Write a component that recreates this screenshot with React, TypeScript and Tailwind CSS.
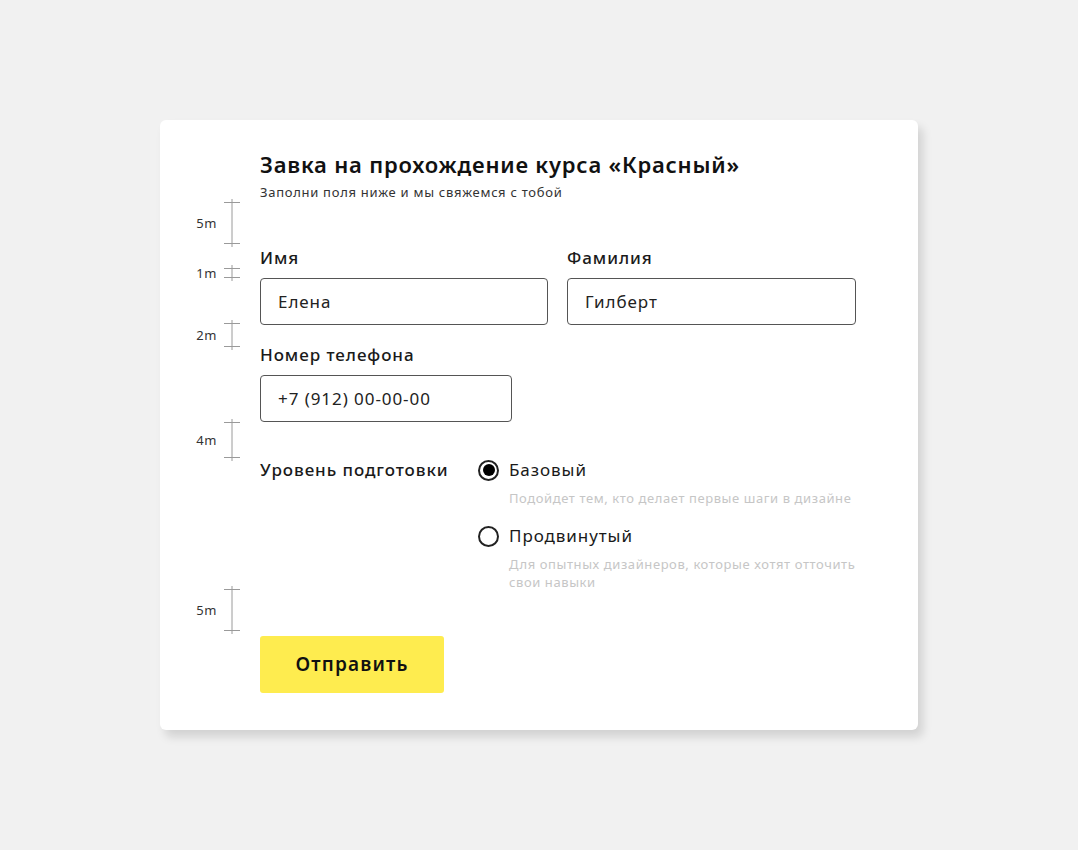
import React from "react";

// spacing annotations on the left edge of the card
const marks = [
  { label: "5m", top: 79, height: 48 },
  { label: "1m", top: 145, height: 16 },
  { label: "2m", top: 200, height: 30 },
  { label: "4m", top: 299, height: 42 },
  { label: "5m", top: 466, height: 48 },
];

function Mark({ label, top, height }: { label: string; top: number; height: number }) {
  return (
    <div className="absolute left-[20px] flex items-center" style={{ top, height }}>
      <span className="w-[37px] text-right text-[13px] leading-none tracking-[0.04em] text-[#333]">{label}</span>
      <svg width="16" height={height} className="ml-[7px]">
        <line x1="8" y1="0" x2="8" y2={height} stroke="#9a9a9a" strokeWidth="1" />
        <line x1="0" y1="3.5" x2="16" y2="3.5" stroke="#9a9a9a" strokeWidth="1" />
        <line x1="0" y1={height - 3.5} x2="16" y2={height - 3.5} stroke="#9a9a9a" strokeWidth="1" />
      </svg>
    </div>
  );
}

function Field({ label, value, width }: { label: string; value: string; width: string }) {
  return (
    <div className={`flex flex-col ${width}`}>
      <label className="text-[17px] leading-[22px] font-medium tracking-[0.055em] text-[#1a1a1a]">{label}</label>
      <input
        readOnly
        value={value}
        className="mt-[9px] h-[47px] w-full rounded-[4px] border-[1.5px] border-[#555] bg-white pl-[17px] text-[17px] tracking-[0.055em] text-[#222] outline-none"
      />
    </div>
  );
}

function Radio({ checked, title, hint }: { checked: boolean; title: string; hint: React.ReactNode }) {
  return (
    <div className="flex flex-col">
      <div className="flex items-center h-[22px]">
        <span className="w-[21px] h-[21px] rounded-full border-2 border-[#222] flex items-center justify-center">
          {checked && <span className="w-[12px] h-[12px] rounded-full bg-black" />}
        </span>
        <span className="ml-[10px] text-[17px] leading-[22px] tracking-[0.055em] text-[#1a1a1a]">{title}</span>
      </div>
      <p className="ml-[31px] mt-[8px] text-[13px] leading-[18px] tracking-[0.045em] text-[#c6c6c6]">{hint}</p>
    </div>
  );
}

export default function App() {
  return (
    <div className="min-h-[850px] bg-[#f1f1f1] pt-[120px] pl-[160px] font-['Noto_Sans',sans-serif]">
      <div className="relative w-[758px] rounded-[6px] bg-white pl-[100px] pt-[30px] pb-[37px] shadow-[5px_7px_10px_rgba(0,0,0,0.13)]">
        {marks.map((m, i) => (
          <Mark key={i} {...m} />
        ))}

        <h1 className="text-[22px] leading-[28px] font-semibold tracking-[0.036em] text-[#111]">
          Завка на прохождение курса «Красный»
        </h1>
        <p className="mt-[5px] text-[13px] leading-[18px] tracking-[0.055em] text-[#333]">
          Заполни поля ниже и мы свяжемся с тобой
        </p>

        <div className="mt-[46px] flex gap-[19px]">
          <Field label="Имя" value="Елена" width="w-[288px]" />
          <Field label="Фамилия" value="Гилберт" width="w-[289px]" />
        </div>

        <div className="mt-[19px]">
          <Field label="Номер телефона" value="+7 (912) 00-00-00" width="w-[252px]" />
        </div>

        <div className="mt-[37px] flex">
          <div className="w-[218px] text-[17px] leading-[22px] font-medium tracking-[0.055em] text-[#1a1a1a]">
            Уровень подготовки
          </div>
          <div className="flex flex-col gap-[18px]">
            <Radio checked title="Базовый" hint="Подойдет тем, кто делает первые шаги в дизайне" />
            <Radio
              checked={false}
              title="Продвинутый"
              hint={
                <>
                  Для опытных дизайнеров, которые хотят отточить
                  <br />
                  свои навыки
                </>
              }
            />
          </div>
        </div>

        <button className="mt-[45px] h-[57px] w-[184px] rounded-[3px] bg-[#feec4f] text-[19px] font-semibold tracking-[0.06em] text-[#111]">
          Отправить
        </button>
      </div>
    </div>
  );
}
